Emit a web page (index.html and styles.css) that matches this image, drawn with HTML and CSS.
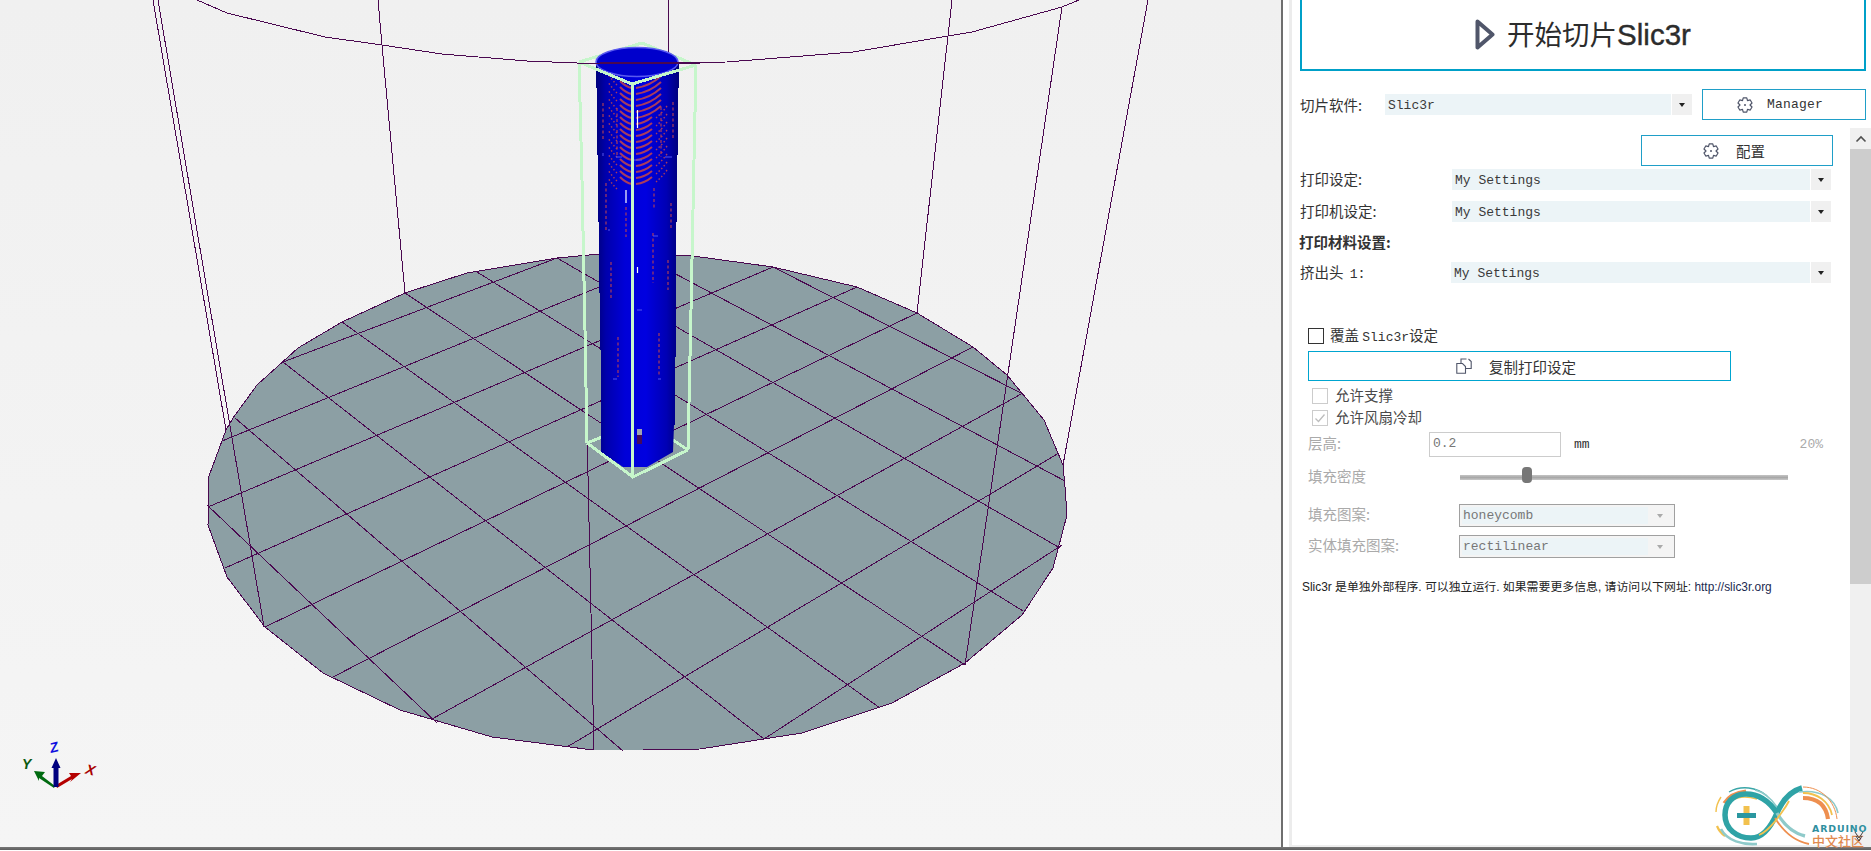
FILE: index.html
```html
<!DOCTYPE html>
<html lang="zh-CN">
<head>
<meta charset="utf-8">
<title>Slic3r</title>
<link rel="stylesheet" href="styles.css">
</head>
<body>
<svg class="defs" width="0" height="0">
  <symbol id="gear" viewBox="0 0 16 16"><path d="M6.23 .92H9.77L10.5 3.67L13.25 2.93L15.02 5.99L13 8L15.02 10.01L13.25 13.07L10.5 12.33L9.77 15.08H6.23L5.5 12.33L2.75 13.07L.98 10.01L3 8L.98 5.99L2.75 2.93L5.5 3.67Z" fill="none" stroke="#50566a" stroke-width="1.2" stroke-linejoin="round"/><circle cx="8" cy="8" r="1" fill="#50566a"/></symbol>
</svg>
<div class="app">
  <div class="view">
    <svg class="scene" width="1281" height="847" viewBox="0 0 1281 847">
      <defs>
        <linearGradient id="body" gradientUnits="userSpaceOnUse" x1="596" y1="0" x2="679" y2="0">
          <stop offset="0" stop-color="#00007c"/><stop offset=".12" stop-color="#0000ac"/><stop offset=".35" stop-color="#0000d8"/><stop offset=".6" stop-color="#0000e0"/><stop offset=".85" stop-color="#0000b4"/><stop offset="1" stop-color="#00007a"/>
        </linearGradient>
        <path id="arcL" d="M632 88Q626 87 620 81"/>
        <path id="arcLo" d="M617 79Q612 74 608 68"/>
        <path id="arcR" d="M636 88Q650 86 661 76"/>
        <path id="arcRs" d="M636 88Q645 87 652 81"/>
        <path id="arcRo" d="M656 90Q662 85 667 78"/>
      </defs>
      <polygon class="plate" points="233,418 257,385 298,348 342,322 405,293 467,273 557,258 600,254 675,255 693,256 773,267 857,287 917,313 973,347 1007,375 1044,420 1063,465 1065,487 1067,515 1053,568 1022,615 965,663 892,703 802,733 700,749 643,750 593,750 492,737 400,710 323,673 265,627 227,577 208,525 209,476 226,430"/>
      <g class="wire">
        <line x1="283" y1="362" x2="557" y2="258"/>
        <line x1="222" y1="441" x2="675" y2="256"/>
        <line x1="208" y1="507" x2="773" y2="267"/>
        <line x1="225" y1="568" x2="857" y2="287"/>
        <line x1="265" y1="627" x2="917" y2="313"/>
        <line x1="333" y1="677" x2="973" y2="347"/>
        <line x1="432" y1="719" x2="1023" y2="393"/>
        <line x1="567" y1="747" x2="1059" y2="453"/>
        <line x1="764" y1="739" x2="1062" y2="545"/>
        <line x1="773" y1="267" x2="1023" y2="394"/>
        <line x1="640" y1="255" x2="1065" y2="481"/>
        <line x1="557" y1="258" x2="1060" y2="548"/>
        <line x1="477" y1="272" x2="1023" y2="611"/>
        <line x1="405" y1="293" x2="965" y2="665"/>
        <line x1="342" y1="322" x2="880" y2="708"/>
        <line x1="283" y1="362" x2="764" y2="739"/>
        <line x1="235" y1="418" x2="623" y2="751"/>
        <line x1="207" y1="505" x2="437" y2="723"/>
        <line x1="153" y1="0" x2="226" y2="430"/>
        <line x1="158" y1="0" x2="264" y2="627"/>
        <polyline points="378,0 382,45 405,293"/>
        <line x1="579" y1="63" x2="594" y2="750"/>
        <line x1="668" y1="0" x2="668" y2="52"/>
        <line x1="952" y1="0" x2="917" y2="313"/>
        <line x1="1062" y1="7" x2="965" y2="665"/>
        <line x1="1148" y1="0" x2="1063" y2="465"/>
        <polyline class="edge" points="233,418 257,385 298,348 342,322 405,293 467,273 557,258 600,254 675,255 693,256 773,267 857,287 917,313 973,347 1007,375 1044,420 1063,465 1065,487 1067,515 1053,568 1022,615 965,663 892,703 802,733 700,749 643,750 593,750 492,737 400,710 323,673 265,627 227,577 208,525 209,476 226,430 233,418"/>
      </g>
      <g class="box">
        <polyline points="579,62 642,43 696,65"/>
        <polyline points="587,443 602,437"/>
        <polyline points="688,450 673,440"/>
      </g>
      <polygon fill="url(#body)" points="596,63 596,88 597,88 597,155 598,155 598,222 599,222 599,293 600,293 600,350 601,350 601,452 623,467 647,467 673,452 674,425 675,425 675,357 676,357 676,222 677,222 677,155 678,155 678,88 679,88 679,63"/>
      <ellipse class="cap" cx="637" cy="62" rx="41" ry="14.5"/>
      <g class="arcs">
        <use href="#arcL"/><use href="#arcL" y="6"/><use href="#arcL" y="12"/><use href="#arcL" y="18"/><use href="#arcL" y="24"/><use href="#arcL" y="30"/><use href="#arcL" y="36"/><use href="#arcL" y="42"/><use href="#arcL" y="48"/><use href="#arcL" y="54"/><use href="#arcL" y="60"/><use href="#arcL" y="66"/><use href="#arcL" y="72"/><use href="#arcL" y="78"/><use href="#arcL" y="84"/><use href="#arcL" y="90"/><use href="#arcL" y="96"/>
        <use href="#arcR"/><use href="#arcR" y="6"/><use href="#arcR" y="12"/><use href="#arcR" y="18"/><use href="#arcR" y="24"/><use href="#arcR" y="30"/><use href="#arcRs" y="36"/><use href="#arcRs" y="42"/><use href="#arcRs" y="48"/><use href="#arcRs" y="54"/><use href="#arcRs" y="60"/><use href="#arcRs" y="66"/><use href="#arcRs" y="72"/><use href="#arcRs" y="78"/><use href="#arcRs" y="84"/><use href="#arcRs" y="90"/><use href="#arcRs" y="96"/>
      </g>
      <g class="dots">
        <use href="#arcLo" y="6"/><use href="#arcLo" y="14"/><use href="#arcLo" y="22"/><use href="#arcLo" y="30"/><use href="#arcLo" y="38"/><use href="#arcLo" y="46"/><use href="#arcLo" y="54"/><use href="#arcLo" y="62"/><use href="#arcLo" y="70"/><use href="#arcLo" y="78"/><use href="#arcLo" y="86"/><use href="#arcLo" y="94"/><use href="#arcLo" y="102"/><use href="#arcLo" y="110"/>
        <use href="#arcRo" y="28"/><use href="#arcRo" y="36"/><use href="#arcRo" y="44"/><use href="#arcRo" y="52"/><use href="#arcRo" y="60"/><use href="#arcRo" y="68"/><use href="#arcRo" y="76"/><use href="#arcRo" y="84"/><use href="#arcRo" y="92"/>
      </g>
      <path class="dash" d="M603 103V140M617 108V158M673 102V140M661 107V157M606 183V230M626 207V237M654 188V210M671 203V230M611 262V300M653 233V283M668 260V290M618 337V377M659 333V375"/>
      <path class="tick" d="M637.5 110V128M626 190V203M637.5 267V273"/>
      <path class="mark" d="M616 157H622M665 157H672M603 153V156M632 160H642M608 230H610M653 236H658M637 310H642M613 379H617M658 379H661"/>
      <rect x="637" y="429" width="5" height="6" fill="#a0a3b0"/>
      <rect x="637" y="435" width="5" height="9" fill="#440a5a"/>
      <g class="box">
        <polyline points="579,62 632,84 696,65"/>
        <polyline points="632,84 633,477"/>
        <polyline points="579,62 582,180 585,330 587,443"/>
        <polyline points="696,65 694,160 691,310 688,450"/>
        <polyline points="587,443 633,477 688,450"/>
      </g>
      <g class="wire"><line x1="579" y1="63" x2="700" y2="63"/><polyline points="197,0 227,13 325,37 382,45 442,54 527,61 577,63 600,63 727,62 853,52 948,36 972,32 1062,7 1079,0"/></g>
      <g class="axes">
        <polygon fill="#006a10" points="34,771 45,772 42,776 55,786 54,788 39,778 39,781"/>
        <polygon fill="#b40000" points="81,773 69,773 71,776 56,785 57,788 72,779 70,782"/>
        <polygon fill="#00007f" points="56,758 51.5,768 53.5,768 53.5,787 58.5,787 58.5,768 60.5,768"/>
        <text class="ax-z" x="50" y="752" transform="rotate(-14 55 748)">Z</text>
        <text class="ax-y" x="22" y="769">Y</text>
        <text class="ax-x" x="86" y="775" transform="rotate(14 91 769)">X</text>
      </g>
    </svg>
  </div>
  <div class="divider"></div>
  <div class="panel">
    <div class="inner">
      <button class="run-btn">
        <svg class="play" width="20" height="31" viewBox="0 0 20 31"><path d="M2.5 2.5L17.5 15.5L2.5 28.5Z" fill="none" stroke="#50566a" stroke-width="4" stroke-linejoin="round"/></svg>
        <span>开始切片<span class="run-lat">Slic3r</span></span>
      </button>
      <div class="soft-row">
        <span class="soft-label">切片软件:</span>
        <div class="combo combo-soft"><span class="combo-text">Slic3r</span><span class="combo-arrow"><i class="tri"></i></span></div>
        <button class="tool-btn manager"><svg class="ico" width="16" height="16"><use href="#gear"/></svg><span class="lat manager-text">Manager</span></button>
      </div>
      <div class="scroll-area">
        <div class="scroll-content">
          <button class="tool-btn config"><svg class="ico" width="16" height="16"><use href="#gear"/></svg><span>配置</span></button>
          <div class="form-row first"><span class="form-label">打印设定:</span><div class="combo combo-form"><span class="combo-text">My Settings</span><span class="combo-arrow"><i class="tri"></i></span></div></div>
          <div class="form-row"><span class="form-label">打印机设定:</span><div class="combo combo-form"><span class="combo-text">My Settings</span><span class="combo-arrow"><i class="tri"></i></span></div></div>
          <div class="section-title">打印材料设置:</div>
          <div class="form-row tight"><span class="form-label narrow">挤出头 <span class="lat lat-one">1</span>:</span><div class="combo combo-ext"><span class="combo-text">My Settings</span><span class="combo-arrow"><i class="tri"></i></span></div></div>
          <label class="check-row override"><span class="cb cb-on"></span><span class="check-text">覆盖 <span class="lat">Slic3r</span>设定</span></label>
          <button class="tool-btn copy">
            <svg class="ico" width="16" height="16" viewBox="0 0 16 16"><path d="M.8 5.5H6.5L9.5 8.5V15.2H.8ZM5 5.5V1H10.5M12.5 1L15.2 3.5V10.5H9.5" fill="none" stroke="#50566a" stroke-width="1.1"/></svg>
            <span>复制打印设定</span>
          </button>
          <label class="check-row sub off"><span class="cb"></span><span class="check-text">允许支撑</span></label>
          <label class="check-row sub off gap6"><span class="cb"><svg width="14" height="14" viewBox="0 0 14 14"><path d="M2.5 7.5L5.5 10.5L11.5 3.5" fill="none" stroke="#bcbcbc" stroke-width="1.3"/></svg></span><span class="check-text">允许风扇冷却</span></label>
          <div class="layer-row">
            <span class="dim-label layer-label">层高:</span>
            <div class="text-field lat">0.2</div>
            <span class="lat unit">mm</span>
            <span class="lat percent">20%</span>
          </div>
          <div class="slider-row">
            <span class="dim-label slider-label">填充密度</span>
            <div class="slider"><span class="thumb"></span></div>
          </div>
          <div class="disabled-row first-dis"><span class="dim-label dis-label">填充图案:</span><div class="dis-combo"><span class="combo-text">honeycomb</span><span class="dis-arrow"><i class="tri tri-dim"></i></span></div></div>
          <div class="disabled-row"><span class="dim-label dis-label">实体填充图案:</span><div class="dis-combo"><span class="combo-text">rectilinear</span><span class="dis-arrow"><i class="tri tri-dim"></i></span></div></div>
          <p class="info">Slic3r 是单独外部程序. 可以独立运行. 如果需要更多信息, 请访问以下网址: <span class="link">http://slic3r.org</span></p>
        </div>
        <div class="scrollbar">
          <span class="sb-arrow"><svg width="12" height="8" viewBox="0 0 12 8"><path d="M1.5 6.5L6 2L10.5 6.5" fill="none" stroke="#505050" stroke-width="1.6"/></svg></span>
          <span class="sb-thumb"></span>
          <span class="sb-track"></span>
        </div>
      </div>
    </div>
    <svg class="logo" width="200" height="100" viewBox="0 0 200 100">
      <g fill="none" stroke-linecap="butt">
        <path d="M58 41C70 34 86 36 96 45" stroke="#3aa6a8" stroke-width="1.4"/>
        <path d="M53 52C58 44 66 41 75 40" stroke="#ee8f4f" stroke-width="3.2"/>
        <path d="M50 46C46 52 45 56 45 61" stroke="#f2c14e" stroke-width="1.4"/>
        <path d="M60 50C66 46 76 45 86 48" stroke="#f2c14e" stroke-width="1.5"/>
        <path d="M46 75C48 80 51 83 54 85" stroke="#f2c14e" stroke-width="2.2"/>
        <path d="M50 78C56 90 72 94 86 93" stroke="#8fcaca" stroke-width="2.6"/>
        <path d="M84 39C92 41 100 47 106 56" stroke="#8fcaca" stroke-width="1.4"/>
        <path d="M106 62C98 50 88 43 75 43C62 43 54 52 54 64C54 78 66 87 80 87C92 87 100 76 106 62C112 48 120 40 131 37" stroke="#2fa3a6" stroke-width="5.5"/>
        <path d="M106 62C113 74 122 82 134 85" stroke="#8fcaca" stroke-width="3.4"/>
        <path d="M104 67C112 80 122 90 138 93" stroke="#ee8f4f" stroke-width="1.8"/>
        <path d="M88 84C96 81 101 74 106 68C110 62 114 58 118 50" stroke="#f2c14e" stroke-width="1.8"/>
        <path d="M128 41C150 38 164 48 167 62" stroke="#8fcaca" stroke-width="1.6"/>
        <path d="M132 36C150 36 164 50 166 68" stroke="#ee8f4f" stroke-width="1"/>
        <path d="M132 42C146 42 158 50 161 64" stroke="#f2c14e" stroke-width="1.8"/>
        <path d="M132 47C146 47 155 54 157 68" stroke="#ee8f4f" stroke-width="4.2"/>
      </g>
      <rect x="72.5" y="55" width="6" height="19" fill="#f2c14e"/>
      <rect x="66" y="62" width="19" height="5" fill="#2a97a0"/>
      <text class="logo-ar" x="141" y="80.5">ARDUINO</text>
      <text class="logo-cn" x="141" y="94.5">中文社区</text>
      <path d="M184 81L188 87L192 81M185 85L188 90L191 85" fill="none" stroke="#444" stroke-width="1"/>
    </svg>
  </div>
</div>
<div class="bottom-line"></div>
</body>
</html>
```
FILE: styles.css
```css
* { box-sizing: border-box; }
html, body { margin: 0; padding: 0; background: #fff; overflow: hidden; }
body { width: 1871px; height: 851px; font-family: "Noto Sans CJK SC", "Liberation Sans", sans-serif; font-size: 14.5px; color: #333; }
.defs { position: absolute; }
button { font: inherit; color: inherit; background: #fff; padding: 0; cursor: default; }

.app { display: flex; width: 1871px; height: 847px; }
.view { width: 1281px; background: linear-gradient(#f0f0f0, #f5f5f5); }
.scene { display: block; }
.divider { width: 2px; background: #6e6e6e; }
.bottom-line { height: 3px; background: linear-gradient(#777, #5e5e5e); }

.plate { fill: #8c9fa4; }
.wire { stroke: #4a0850; stroke-width: 1; fill: none; shape-rendering: crispEdges; }
.edge { stroke-width: 1; }
.box { stroke: #c6f6cb; stroke-width: 3; fill: none; shape-rendering: crispEdges; }
.cap { fill: #0000cc; stroke: #5a5af0; stroke-width: 1.5; }
.arcs use { stroke: #a93c5c; stroke-width: 2; fill: none; }
.dots use { stroke: #a93c5c; stroke-width: 1.4; fill: none; stroke-dasharray: 1.5 2.2; }
.dash { stroke: #a93c5c; stroke-width: 1.2; stroke-dasharray: 3 2.5; fill: none; }
.tick { stroke: #fff; stroke-width: 1.2; fill: none; }
.mark { stroke: #5555ee; stroke-width: 1; fill: none; }
.axes text { font-family: "Liberation Sans", sans-serif; font-weight: 700; font-style: italic; font-size: 14px; }
.ax-z { fill: #1010e0; }
.ax-y { fill: #0c5a10; }
.ax-x { fill: #a80000; }

.panel { position: relative; flex: 1; padding-left: 6px; }
.inner { height: 100%; border-left: 3px solid #ececec; border-bottom: 2px solid #eee; display: flex; flex-direction: column; }

.run-btn { margin-left: 8px; width: 566px; height: 71px; border: 2px solid #00a0c8; border-top: 0; display: flex; align-items: center; justify-content: center; gap: 12px; font-size: 27.5px; color: #2c2c2c; line-height: 1; flex: none; }
.run-lat { font-family: "Liberation Sans", sans-serif; font-size: 29.5px; -webkit-text-stroke: .4px #2c2c2c; }
.play { flex: none; }

.soft-row { display: flex; align-items: center; margin: 18px 0 0 8px; height: 31px; flex: none; }
.soft-label { width: 85px; }
.combo { display: flex; height: 21px; }
.combo-soft { width: 307px; }
.combo-text { font-family: "Liberation Mono", monospace; font-size: 13px; line-height: 23px; padding-left: 3px; flex: 1; background: #ecf4f7; color: #3a3a3a; }
.combo-arrow { width: 20px; margin-left: 1px; background: #f0f0f0; display: flex; align-items: center; justify-content: center; }
.tri { display: block; width: 0; height: 0; border: 3.5px solid transparent; border-top: 4px solid #222; border-bottom: 0; }
.tri-dim { border-top-color: #aaa; }

.tool-btn { border: 1.5px solid #1f9fc8; display: flex; align-items: center; color: #333; }
.ico { flex: none; }
.lat { font-family: "Liberation Mono", monospace; font-size: 13px; }
.lat-one { margin-left: 3px; margin-right: 2px; }
.manager { width: 164px; height: 31px; margin-left: 10px; padding-left: 34px; }
.manager-text { margin-left: 14px; letter-spacing: .2px; }

.scroll-area { display: flex; flex: 1; margin-top: 8px; min-height: 0; }
.scroll-content { width: 558px; padding-top: 7px; }
.scrollbar { width: 21px; display: flex; flex-direction: column; }
.sb-arrow { height: 21px; background: #f0f0f0; display: flex; align-items: center; justify-content: center; }
.sb-thumb { height: 435px; background: #cdcdcd; }
.sb-track { flex: 1; background: #f0f0f0; }

.config { width: 192px; height: 31px; margin-left: 349px; padding-left: 61px; gap: 17px; }

.form-row { display: flex; align-items: center; margin: 11px 0 0 8px; height: 21px; }
.form-row.first { margin-top: 3px; }
.form-row.tight { margin-top: 10px; }
.form-label { width: 152px; white-space: pre; padding-bottom: 3px; }
.form-label.narrow { width: 151px; }
.combo-form { width: 379px; }
.combo-ext { width: 380px; }
.section-title { margin: 10px 0 0 7px; height: 20px; line-height: 20px; font-weight: 700; }

.check-row { display: flex; align-items: center; gap: 6px; }
.check-text { padding-bottom: 3px; }
.override { margin: 45px 0 0 16px; height: 16px; }
.cb { width: 16px; height: 16px; border: 1px solid #ccc; background: #fff; display: block; flex: none; }
.cb svg { display: block; margin: 0; }
.cb-on { border: 1.5px solid #333; }
.copy { width: 423px; height: 30px; margin: 7px 0 0 16px; padding-left: 147px; gap: 17px; border-color: #00a5d0; }
.sub { margin: 7px 0 0 20px; height: 16px; gap: 7px; }
.sub.gap6 { margin-top: 6px; }
.off { color: #4a4a4a; }

.dim-label { color: #aaa; padding-bottom: 4px; }
.layer-row { display: flex; align-items: center; height: 25px; margin: 6px 0 0 16px; padding-right: 27px; }
.layer-label { width: 121px; }
.text-field { width: 132px; height: 25px; border: 1px solid #ccc; padding-left: 3px; line-height: 22px; color: #777; }
.unit { margin-left: 13px; color: #333; }
.percent { margin-left: auto; color: #aaa; }

.slider-row { display: flex; align-items: center; height: 24px; margin: 8px 0 0 16px; }
.slider-label { width: 152px; }
.slider { position: relative; width: 328px; height: 5px; background: linear-gradient(#c4c4c4, #a8a8a8 50%, #c8c8c8); }
.thumb { position: absolute; left: 62px; top: -8px; width: 10px; height: 16px; border-radius: 4px; background: #777; }

.disabled-row { display: flex; align-items: center; height: 23px; margin: 8px 0 0 16px; }
.disabled-row.first-dis { margin-top: 15px; }
.dis-label { width: 151px; }
.dis-combo { width: 216px; height: 23px; border: 1px solid #a0a0a0; border-width: 1.5px; display: flex; padding: 2px; background: #f4f4f4; }
.dis-combo .combo-text { color: #777; line-height: 18px; padding-left: 1px; flex: none; width: 186px; }
.dis-arrow { flex: 1; display: flex; align-items: center; justify-content: center; }

.info { margin: 20px 0 0 10px; height: 18px; line-height: 18px; font-family: "Liberation Sans", "Noto Sans CJK SC", sans-serif; font-size: 11.9px; color: #222; white-space: nowrap; }
.link { color: #1b2a50; }

.logo { position: absolute; right: 0; top: 751px; }
.logo-ar { font-family: "DejaVu Sans", sans-serif; font-weight: 700; font-size: 9.4px; letter-spacing: .9px; fill: #2f8f9f; }
.logo-cn { font-family: "Noto Sans CJK SC", sans-serif; font-weight: 500; font-size: 13px; fill: #e08a50; }
```
